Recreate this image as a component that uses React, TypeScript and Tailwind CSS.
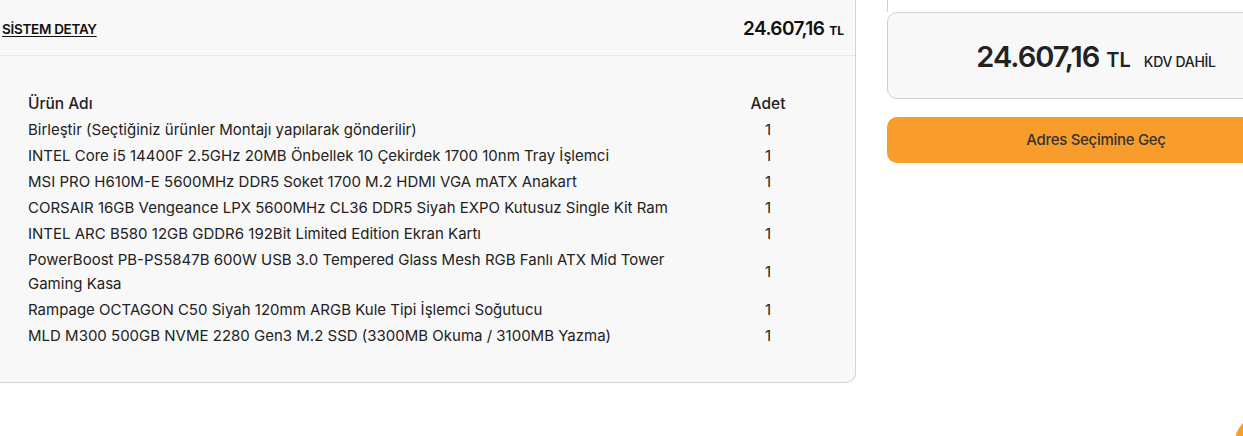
const items = [
  "Birleştir (Seçtiğiniz ürünler Montajı yapılarak gönderilir)",
  "INTEL Core i5 14400F 2.5GHz 20MB Önbellek 10 Çekirdek 1700 10nm Tray İşlemci",
  "MSI PRO H610M-E 5600MHz DDR5 Soket 1700 M.2 HDMI VGA mATX Anakart",
  "CORSAIR 16GB Vengeance LPX 5600MHz CL36 DDR5 Siyah EXPO Kutusuz Single Kit Ram",
  "INTEL ARC B580 12GB GDDR6 192Bit Limited Edition Ekran Kartı",
  "PowerBoost PB-PS5847B 600W USB 3.0 Tempered Glass Mesh RGB Fanlı ATX Mid Tower Gaming Kasa",
  "Rampage OCTAGON C50 Siyah 120mm ARGB Kule Tipi İşlemci Soğutucu",
  "MLD M300 500GB NVME 2280 Gen3 M.2 SSD (3300MB Okuma / 3100MB Yazma)",
];

export default function App() {
  return (
    <div
      className="relative h-[436px] w-[1243px] overflow-hidden bg-white text-[#222]"
      style={{ fontFamily: "Inter, 'Noto Sans', sans-serif" }}
    >
      <div className="flex items-start gap-[31px]">
        {/* sistem detay */}
        <div className="ml-[-20px] w-[876px] shrink-0 rounded-br-[10px] border-b border-r border-[#d4d4d4] bg-[#f8f8f8]">
          <div className="flex h-[56px] items-center justify-between border-b border-dotted border-[#d9d9d9] pl-[22px] pr-[11px] pt-[3px]">
            <span className="text-[13.5px] font-semibold tracking-[-0.3px] text-[#111] underline underline-offset-2">
              SİSTEM DETAY
            </span>
            <span className="flex items-baseline gap-[5px] text-[#111]">
              <span className="text-[19px] font-semibold tracking-[-0.6px]">24.607,16</span>
              <span className="text-[12px] font-bold">TL</span>
            </span>
          </div>
          <div className="pb-[33px] pl-[48px] pr-[20px] pt-[35px]">
            <table className="w-[810px] border-collapse text-[15px] tracking-[0px]">
              <thead>
                <tr className="h-[26px]">
                  <th className="text-left text-[15.5px] font-medium">Ürün Adı</th>
                  <th className="w-[140px] text-center text-[15.5px] font-medium">Adet</th>
                </tr>
              </thead>
              <tbody>
                {items.map((name) => (
                  <tr key={name}>
                    <td className="py-px pr-[10px] leading-6">{name}</td>
                    <td className="py-px text-center leading-6">1</td>
                  </tr>
                ))}
              </tbody>
            </table>
          </div>
        </div>

        {/* sipariş özeti */}
        <div className="w-[418px] shrink-0">
          <div className="h-[12px] border-l border-[#cfcfcf]" />
          <div className="flex h-[87px] items-baseline justify-center gap-[7px] rounded-l-[10px] border border-[#cfcfcf] bg-[#f8f8f8] pt-[29px] text-[#222]">
            <span className="text-[29px] font-semibold leading-none tracking-[-1px]">24.607,16</span>
            <span className="text-[20px] font-semibold leading-none">TL</span>
            <span className="ml-[6px] text-[14px] font-medium leading-none tracking-[-0.3px]">KDV DAHİL</span>
          </div>
          <button className="mt-[18px] flex h-[46px] w-full items-center justify-center rounded-[10px] bg-[#f89d2b] text-[15px] font-medium tracking-[-0.3px] text-[#333]">
            Adres Seçimine Geç
          </button>
        </div>
      </div>

      <div className="absolute bottom-[-32px] right-[-44px] h-[52px] w-[52px] rounded-full bg-[#f89d2b]" />
    </div>
  );
}
